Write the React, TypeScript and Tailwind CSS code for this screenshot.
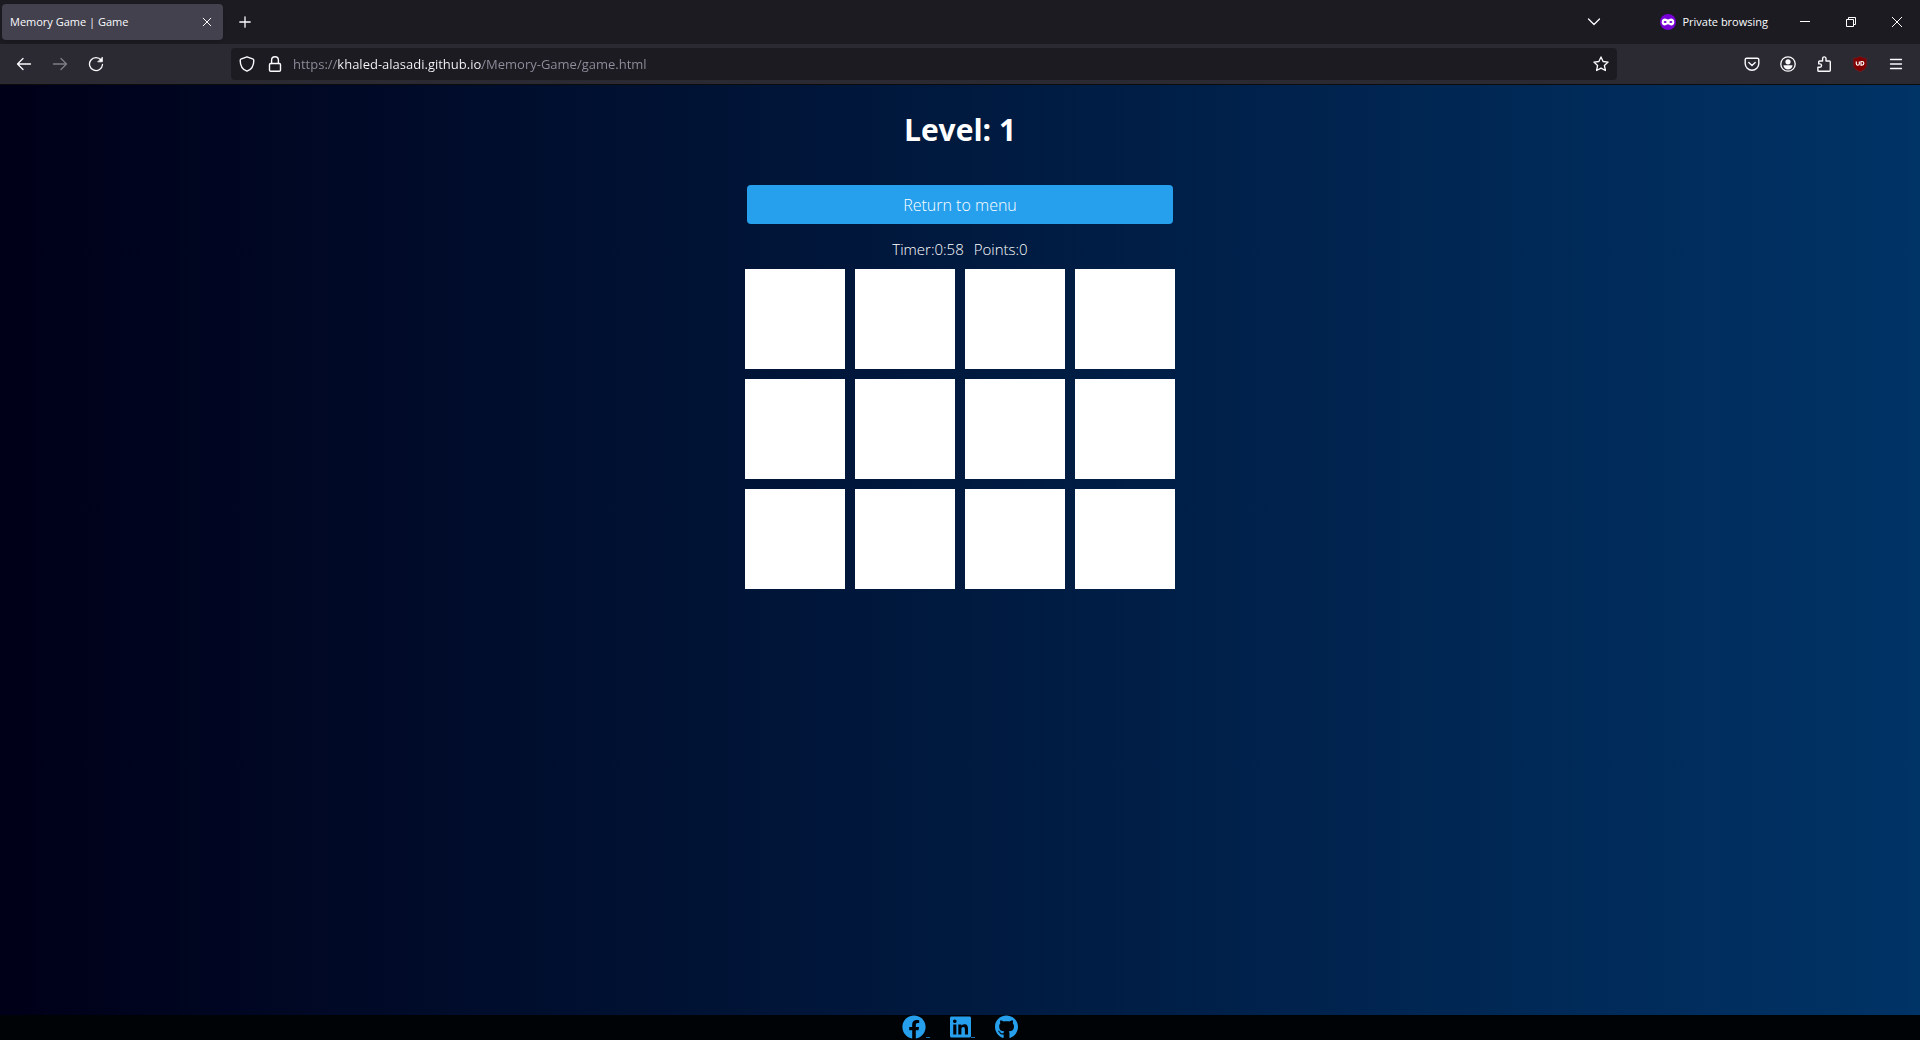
import type { ReactNode } from "react";
import { FaFacebook, FaGithub, FaLinkedin } from "react-icons/fa";

type IconProps = { children: ReactNode; width?: number };

function Icon({ children, width = 1.3 }: IconProps) {
  return (
    <svg
      viewBox="0 0 16 16"
      className="size-4"
      fill="none"
      stroke="currentColor"
      strokeWidth={width}
      strokeLinecap="round"
      strokeLinejoin="round"
      aria-hidden="true"
    >
      {children}
    </svg>
  );
}

function ToolButton({ label, children, disabled }: { label: string; children: ReactNode; disabled?: boolean }) {
  return (
    <button
      type="button"
      aria-label={label}
      disabled={disabled}
      className="flex h-8 w-9 shrink-0 items-center justify-center rounded text-[#fbfbfe] disabled:opacity-40"
    >
      {children}
    </button>
  );
}

function WindowButton({ label, children }: { label: string; children: ReactNode }) {
  return (
    <button type="button" aria-label={label} className="flex h-11 w-[46px] items-center justify-center text-white">
      <svg
        viewBox="0 0 10 10"
        className="size-[10px] overflow-visible"
        fill="none"
        stroke="currentColor"
        strokeWidth="1"
        aria-hidden="true"
      >
        {children}
      </svg>
    </button>
  );
}

function TabBar() {
  return (
    <div className="flex h-11 items-center bg-[#1c1b22] pl-0.5 text-[11px] text-[#fbfbfe]">
      <div className="flex h-9 w-[221px] items-center justify-between rounded bg-[#42414d] px-2 shadow-sm">
        <span>Memory Game | Game</span>
        <button type="button" aria-label="Close tab" className="flex size-4 items-center justify-center">
          <Icon width={1}>
            <path d="M4.200 4.200l7.600 7.600M11.800 4.200l-7.600 7.600" />
          </Icon>
        </button>
      </div>
      <button type="button" aria-label="New tab" className="ml-1 flex size-9 items-center justify-center">
        <Icon>
          <path d="M8 2.800v10.400M2.800 8h10.400" />
        </Icon>
      </button>
      <div className="flex-1" />
      <button type="button" aria-label="List all tabs" className="mr-12 flex size-9 items-center justify-center">
        <Icon>
          <path d="M2.500 5l5.500 5.500L13.500 5" />
        </Icon>
      </button>
      <div className="mr-3.5 flex items-center gap-1.5">
        <svg viewBox="0 0 16 16" className="size-4" aria-hidden="true">
          <circle cx="8" cy="8" r="8" fill="#7a00d8" />
          <path
            d="M4.900 4.600C3 4.600 1.700 6 1.700 7.900c0 2 1.200 3.500 3 3.500 1.500 0 2.200-1.200 3.300-1.200s1.800 1.200 3.300 1.200c1.800 0 3-1.500 3-3.500 0-1.900-1.300-3.300-3.200-3.300-1.500 0-2.100.8-3.100.8s-1.600-.8-3.100-.8z"
            fill="#fff"
          />
          <ellipse cx="5.100" cy="8" rx="1.500" ry="0.900" fill="#7a00d8" />
          <ellipse cx="10.900" cy="8" rx="1.500" ry="0.900" fill="#7a00d8" />
        </svg>
        <span>Private browsing</span>
      </div>
      <div className="flex">
        <WindowButton label="Minimize">
          <path d="M0 4.500h10" />
        </WindowButton>
        <WindowButton label="Restore">
          <path d="M.5 2.500h7v7h-7zM2.500 2.500v-2h7v7h-2" />
        </WindowButton>
        <WindowButton label="Close window">
          <path d="M0 0l10 10M10 0L0 10" />
        </WindowButton>
      </div>
    </div>
  );
}

function NavBar() {
  return (
    <div className="flex items-center border-b border-[#0c0c0d] bg-[#2b2a33] px-1.5 py-1 text-[#fbfbfe]">
      <ToolButton label="Back">
        <Icon>
          <path d="M14.500 8H1.500M7 2.500L1.500 8 7 13.500" />
        </Icon>
      </ToolButton>
      <ToolButton label="Forward" disabled>
        <Icon>
          <path d="M1.500 8h13M9 2.500L14.500 8 9 13.500" />
        </Icon>
      </ToolButton>
      <ToolButton label="Reload">
        <Icon>
          <path d="M13.200 4.200A6.500 6.500 0 1 0 14.500 8.500" />
          <path d="M14.400 1.500v4.300h-4.300z" fill="currentColor" strokeWidth="0.8" />
        </Icon>
      </ToolButton>
      <div className="w-[117px]" />
      <div className="flex h-8 flex-1 items-center rounded bg-[#1c1b22] px-2">
        <button type="button" aria-label="Tracking protection">
          <Icon width={1.4}>
            <path d="M8 .8l5.600 2.100c.7.250 1.200.7 1.200 1.500C14.800 9.500 12.500 13.500 8 15.200 3.500 13.500 1.200 9.500 1.200 4.400c0-.8.5-1.250 1.200-1.500z" />
          </Icon>
        </button>
        <button type="button" aria-label="Connection secure" className="ml-3">
          <Icon width={1.4}>
            <rect x="2.500" y="7.500" width="11" height="7.800" rx="1.200" />
            <path d="M4.600 7.500V4.200a3.400 3.400 0 0 1 6.800 0v3.300" />
          </Icon>
        </button>
        <input
          type="text"
          aria-label="Address"
          readOnly
          value="https://khaled-alasadi.github.io/Memory-Game/game.html"
          className="ml-2.5 h-8 min-w-0 flex-1 bg-[linear-gradient(90deg,#8f8f9d_44px,#fbfbfe_44px,#fbfbfe_189px,#8f8f9d_189px)] bg-clip-text text-[13px] text-transparent outline-none"
        />
        <button type="button" aria-label="Bookmark this page">
          <Icon>
            <path d="M8 .9l2.100 4.600 5 .6-3.700 3.400 1 5L8 12.100l-4.400 2.400 1-5L.9 6.100l5-.6z" />
          </Icon>
        </button>
      </div>
      <div className="w-[117px]" />
      <ToolButton label="Save to Pocket">
        <Icon width={1.4}>
          <path d="M2.600 2.200h10.800c.8 0 1.400.6 1.400 1.400v3.800a6.800 6.800 0 0 1-13.600 0V3.600c0-.8.6-1.400 1.400-1.400z" />
          <path d="M4.800 6.500L8 9.500l3.200-3" />
        </Icon>
      </ToolButton>
      <ToolButton label="Account">
        <Icon>
          <circle cx="8" cy="8" r="7.200" />
          <circle cx="8" cy="5.800" r="2.600" fill="currentColor" stroke="none" />
          <path d="M3.500 9.300h9c0 2.400-2 4.200-4.500 4.200s-4.500-1.800-4.500-4.200z" fill="currentColor" stroke="none" />
        </Icon>
      </ToolButton>
      <ToolButton label="Extensions">
        <Icon width={1.4}>
          <path d="M2.700 15.200h10.600c.6 0 1-.4 1-1V6c0-.6-.4-1-1-1H10V2.600a1.700 1.700 0 0 0-3.400 0V5H3.700c-.6 0-1 .4-1 1v1.900h1.200a1.600 1.600 0 0 1 0 3.300H1.900v3.200c0 .5.3.8.8.8z" />
        </Icon>
      </ToolButton>
      <ToolButton label="uBlock Origin">
        <svg viewBox="0 0 16 16" className="size-4 overflow-visible" aria-hidden="true">
          <path
            d="M8 .3c2 1.200 4.300 1.900 6.800 1.900v5.800c0 3.900-2.400 5.900-6.800 7.800C3.600 13.900 1.200 11.900 1.200 8V2.200C3.700 2.200 6 1.500 8 .3z"
            fill="#800000"
            stroke="#5c2a30"
            strokeWidth="0.600"
          />
          <path
            d="M4.300 5.500v2.200a1.500 1.500 0 0 0 3 0V5.500M9 5.500v3.700h1a1.800 1.800 0 0 0 0-3.700z"
            fill="none"
            stroke="#fff"
            strokeWidth="1.200"
          />
        </svg>
      </ToolButton>
      <ToolButton label="Application menu">
        <Icon>
          <path d="M2.500 3.500h11M2.500 8h11M2.500 12.500h11" />
        </Icon>
      </ToolButton>
    </div>
  );
}

const cards = Array.from({ length: 12 }, (_, i) => i + 1);

function Game() {
  return (
    <main className="flex flex-1 flex-col items-center bg-[linear-gradient(to_right,#000018,#003366)] pt-5 text-white">
      <h1 className="text-[30px] leading-[50px] font-bold">Level: 1</h1>
      <button type="button" className="mt-[30px] h-[39px] w-[426px] max-w-full rounded bg-[#269fed] text-base font-light">
        Return to menu
      </button>
      <div className="mt-[13px] flex gap-2.5 text-[15px] leading-6 font-light">
        <span>Timer:0:58</span>
        <span>Points:0</span>
      </div>
      <div className="mt-2 grid grid-cols-4 gap-2.5">
        {cards.map((card) => (
          <button key={card} type="button" aria-label={`Card ${card}`} className="size-[100px] bg-white" />
        ))}
      </div>
    </main>
  );
}

function Footer() {
  return (
    <footer className="flex h-[25px] justify-center gap-5 bg-[#000306] text-2xl text-[#269fed]">
      <a href="#facebook" aria-label="Facebook" className="flex">
        <FaFacebook />
        <span className="h-[23px] w-1 border-b border-[#1b6fa6]" />
      </a>
      <a href="#linkedin" aria-label="LinkedIn" className="flex">
        <FaLinkedin className="w-[21px]" />
        <span className="h-[23px] w-1 border-b border-[#1b6fa6]" />
      </a>
      <a href="#github" aria-label="GitHub">
        <FaGithub className="w-[23px]" />
      </a>
    </footer>
  );
}

export default function App() {
  return (
    <div className="flex min-h-screen flex-col font-['Open_Sans','Noto_Sans',sans-serif]">
      <TabBar />
      <NavBar />
      <Game />
      <Footer />
    </div>
  );
}
